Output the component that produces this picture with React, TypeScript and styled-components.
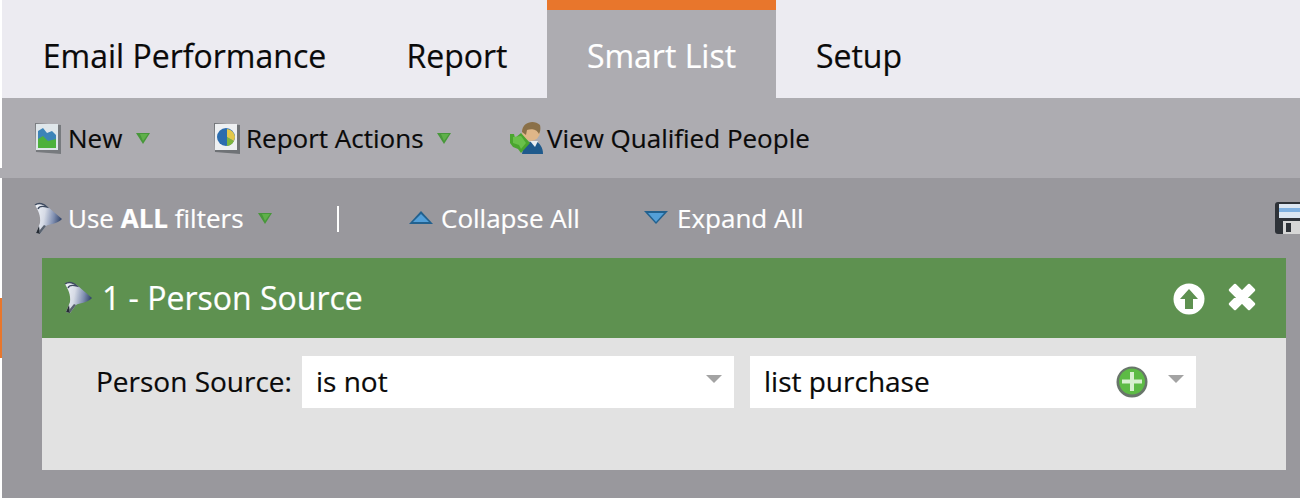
import React from "react";
import styled, { createGlobalStyle } from "styled-components";

const Global = createGlobalStyle`
  html, body { margin: 0; padding: 0; background: #99989d; }
  body { font-family: "Open Sans", "Liberation Sans", sans-serif; -webkit-text-stroke: 0.2px currentColor; }
`;

const Page = styled.div`
  width: 1300px;
  height: 498px;
  display: flex;
  overflow: hidden;
`;

const Rail = styled.div`
  width: 2px;
  flex: none;
  display: flex;
  flex-direction: column;
  background: #fff;
`;

const RailPart = styled.div<{ $h: number; $c: string }>`
  height: ${(p) => p.$h}px;
  background: ${(p) => p.$c};
`;

const Main = styled.div`
  flex: 1;
  min-width: 0;
  display: flex;
  flex-direction: column;
`;

const Tabs = styled.div`
  height: 98px;
  background: #ecebf1;
  display: flex;
`;

const Tab = styled.div<{ $active?: boolean; $w: number }>`
  width: ${(p) => p.$w}px;
  box-sizing: border-box;
  display: flex;
  align-items: center;
  justify-content: center;
  font-size: 32px;
  color: ${(p) => (p.$active ? "#fff" : "#0a0a0a")};
  background: ${(p) => (p.$active ? "#adacb1" : "transparent")};
  border-top: ${(p) => (p.$active ? "10px solid #e8762c" : "none")};
  padding-top: ${(p) => (p.$active ? "3px" : "13px")};
`;

const Toolbar = styled.div`
  height: 80px;
  background: #adacb1;
  display: flex;
  align-items: center;
  padding-left: 31px;
  font-size: 26px;
  color: #0a0a0a;
`;

const ToolItem = styled.div<{ $w: number }>`
  width: ${(p) => p.$w}px;
  display: flex;
  align-items: center;
`;

const ItemLabel = styled.span<{ $ml?: number; $mr?: number }>`
  margin-left: ${(p) => p.$ml ?? 0}px;
  margin-right: ${(p) => p.$mr ?? 0}px;
`;

const FilterBar = styled.div`
  height: 80px;
  display: flex;
  align-items: center;
  padding-left: 31px;
  font-size: 26px;
  color: #fff;
  position: relative;
`;

const Divider = styled.span`
  width: 2px;
  height: 26px;
  background: #fff;
  margin-left: 3px;
  margin-top: 2px;
`;

const Panel = styled.section`
  margin-left: 40px;
  width: 1244px;
`;

const PanelHead = styled.div`
  height: 80px;
  box-sizing: border-box;
  background: #5e9150;
  color: #fff;
  display: flex;
  align-items: center;
  padding: 0 29px 2px 21px;
  font-size: 32px;
`;

const PanelTitle = styled.span`
  flex: 1;
  margin-left: 9px;
`;

const PanelBody = styled.div`
  height: 132px;
  background: #e2e2e2;
  padding-top: 18px;
  box-sizing: border-box;
  display: flex;
  align-items: flex-start;
  padding-left: 54px;
  font-size: 28px;
  color: #0a0a0a;
`;

const FieldLabel = styled.div`
  width: 206px;
  height: 52px;
  line-height: 51px;
`;

const Select = styled.div<{ $w: number }>`
  width: ${(p) => p.$w}px;
  height: 52px;
  box-sizing: border-box;
  margin-right: 16px;
  background: #fff;
  padding: 0 12px 2px 14px;
  display: flex;
  align-items: center;
`;

const SelectText = styled.span`
  flex: 1;
`;

const Caret = styled.span`
  width: 0;
  height: 0;
  border-left: 8.5px solid transparent;
  border-right: 8.5px solid transparent;
  border-top: 8px solid #a3a3a3;
  margin-top: -4px;
`;

const Icon = styled.svg<{ $ml?: number; $mr?: number; $mt?: number; $soft?: boolean }>`
  flex: none;
  margin-left: ${(p) => p.$ml ?? 0}px;
  margin-right: ${(p) => p.$mr ?? 0}px;
  margin-top: ${(p) => p.$mt ?? 0}px;
  filter: ${(p) => (p.$soft ? "blur(0.6px)" : "none")};
`;

const Save = styled(Icon)`
  position: absolute;
  right: -10px;
  top: 24px;
`;

const Funnel = ({ id }: { id: string }) => (
  <Icon $soft width={30} height={33} viewBox="0 0 30 33">
    <defs>
      <linearGradient id={id} x1="0" y1="0.3" x2="1" y2="0.5">
        <stop offset="0" stopColor="#eef1f6" />
        <stop offset="0.35" stopColor="#d6dbe6" />
        <stop offset="0.7" stopColor="#7f8eb0" />
        <stop offset="1" stopColor="#2a3d63" />
      </linearGradient>
    </defs>
    <path d="M2 3 C6 0 11 2 15 5 L29 17 C24 22 16 22 13 24 L7 32 L3 31 L7 21 C8 14 5 8 2 3 Z" fill={`url(#${id})`} />
    <path d="M3 31 L6 24 L7 32 Z" fill="#252b33" />
    <path d="M7 32 L13 24 L11 23 L6 29 Z" fill="#59626f" />
    <path d="M2 3 C6 0 11 2 14 5 C10 4 6 4 5 7" fill="none" stroke="#3f4b60" strokeWidth="1.4" />
  </Icon>
);

const GreenDrop = () => (
  <Icon $soft width={16} height={13} viewBox="0 0 16 13">
    <path d="M1 1 H15 L8 12 Z" fill="#47973a" />
    <path d="M5 2 H13 L8 9 Z" fill="#5fb04a" />
  </Icon>
);

const NewIcon = () => (
  <Icon $soft width={30} height={32} viewBox="0 0 30 32">
    <path d="M2 1 L28 3 V32 L3 30 Z" fill="#777a7e" />
    <rect x="3" y="2" width="22" height="26" fill="#dfe6ea" />
    <path d="M5 9 L10 6 L14 11 L19 9 L23 13 V26 H5 Z" fill="#3c84b8" />
    <path d="M5 17 L10 14 L15 19 L23 17 V26 H5 Z" fill="#4db13c" />
  </Icon>
);

const ReportIcon = () => (
  <Icon $soft width={30} height={32} viewBox="0 0 30 32">
    <path d="M2 1 L28 3 V32 L3 30 Z" fill="#6f7276" />
    <rect x="3" y="2" width="22" height="26" fill="#eef0f2" />
    <circle cx="14" cy="15" r="9" fill="#2b6cae" />
    <path d="M15 15 L22 19 A9 9 0 0 1 15 24 Z" fill="#7db53c" />
    <path d="M15 7 A9 9 0 0 1 23 15 L22 19 L15 15 Z" fill="#e3c84a" />
  </Icon>
);

const PeopleIcon = () => (
  <Icon $soft width={34} height={34} viewBox="0 0 34 34">
    <path d="M12 33 C13 23 20 20 24 20 C30 21 33 27 33 33 Z" fill="#1f5a8c" />
    <path d="M20 20 L25 26 L28 20 Z" fill="#e9eef2" />
    <circle cx="21" cy="11" r="9" fill="#dfb688" />
    <path d="M12 11 C12 1 24 -2 30 4 C31 8 30 11 29 13 C26 7 20 8 17 9 L16 14 Z" fill="#8a7048" />
    <path d="M0 13 L4 13 L5 17 L11 12 L20 22 L11 32 L8 28 L3 26 L0 22 Z" fill="#4aa52f" />
    <path d="M3 16 L11 15 L16 22 L11 28 L9 24 L3 22 Z" fill="#69c04a" />
  </Icon>
);

const BlueTri = ({ up }: { up?: boolean }) => (
  <Icon $soft width={26} height={16} viewBox="0 0 26 16">
    <path d={up ? "M13 1 L25 14 H1 Z" : "M1 1 H25 L13 14 Z"} fill="#22618f" />
    <path d={up ? "M13 4 L21 12 H5 Z" : "M5 3 H21 L13 12 Z"} fill="#539fd8" />
  </Icon>
);

const UpCircle = () => (
  <Icon $mt={4} width={32} height={32} viewBox="0 0 32 32">
    <circle cx="16" cy="16" r="15.5" fill="#fff" />
    <path d="M16 6 L25 16 H20 V26 H12 V16 H7 Z" fill="#5e9150" />
  </Icon>
);

const CloseX = () => (
  <Icon $ml={22} width={30} height={30} viewBox="0 0 30 30">
    <path d="M3 8 L8 3 L15 10 L22 3 L27 8 L20 15 L27 22 L22 27 L15 20 L8 27 L3 22 L10 15 Z" fill="#fff" stroke="#fff" strokeWidth="2.5" strokeLinejoin="round" />
  </Icon>
);

const PlusCircle = () => (
  <Icon $mr={20} $mt={2} $soft width={32} height={32} viewBox="0 0 32 32">
    <circle cx="16" cy="16" r="15.5" fill="#68756a" />
    <circle cx="16" cy="15.5" r="13" fill="#5dbb45" />
    <path d="M14 6 H18 V13.5 H26 V17.5 H18 V25 H14 V17.5 H6 V13.5 H14 Z" fill="#d8f0d0" />
  </Icon>
);

const App = () => (
  <Page>
    <Global />
    <Rail>
      <RailPart $h={168} $c="#fff" />
      <RailPart $h={10} $c="#adacb1" />
      <RailPart $h={120} $c="#fff" />
      <RailPart $h={60} $c="#e8762c" />
      <RailPart $h={140} $c="#fff" />
    </Rail>
    <Main>
      <Tabs>
        <Tab $w={365}>Email Performance</Tab>
        <Tab $w={180}>Report</Tab>
        <Tab $w={229} $active>Smart List</Tab>
        <Tab $w={166}>Setup</Tab>
      </Tabs>
      <Toolbar>
        <ToolItem $w={179}>
          <NewIcon /><ItemLabel $ml={5} $mr={13}>New</ItemLabel><GreenDrop />
        </ToolItem>
        <ToolItem $w={298}>
          <ReportIcon /><ItemLabel $ml={4} $mr={12}>Report Actions</ItemLabel><GreenDrop />
        </ToolItem>
        <ToolItem $w={320}>
          <PeopleIcon /><ItemLabel $ml={3}>View Qualified People</ItemLabel>
        </ToolItem>
      </Toolbar>
      <FilterBar>
        <ToolItem $w={301}>
          <Funnel id="funnel-bar" /><ItemLabel $ml={5} $mr={13}>Use <b>ALL</b> filters</ItemLabel><GreenDrop />
        </ToolItem>
        <ToolItem $w={74}><Divider /></ToolItem>
        <ToolItem $w={235}>
          <BlueTri up /><ItemLabel $ml={7}>Collapse All</ItemLabel>
        </ToolItem>
        <ToolItem $w={200}>
          <BlueTri /><ItemLabel $ml={8}>Expand All</ItemLabel>
        </ToolItem>
        <Save width="35" height="32" viewBox="0 0 35 32">
          <rect x="0" y="0" width="35" height="32" rx="3" fill="#2e3238" />
          <rect x="4" y="2" width="31" height="14" fill="#dbe6f2" />
          <rect x="4" y="6" width="31" height="4" fill="#7fb0e0" />
          <rect x="8" y="19" width="27" height="13" fill="#d6d6d6" />
          <rect x="11" y="21" width="5" height="9" fill="#2e3238" />
        </Save>
      </FilterBar>
      <Panel>
        <PanelHead>
          <Funnel id="funnel-head" />
          <PanelTitle>1 - Person Source</PanelTitle>
          <UpCircle />
          <CloseX />
        </PanelHead>
        <PanelBody>
          <FieldLabel>Person Source:</FieldLabel>
          <Select $w={432}>
            <SelectText>is not</SelectText>
            <Caret />
          </Select>
          <Select $w={446}>
            <SelectText>list purchase</SelectText>
            <PlusCircle />
            <Caret />
          </Select>
        </PanelBody>
      </Panel>
    </Main>
  </Page>
);

export default App;
